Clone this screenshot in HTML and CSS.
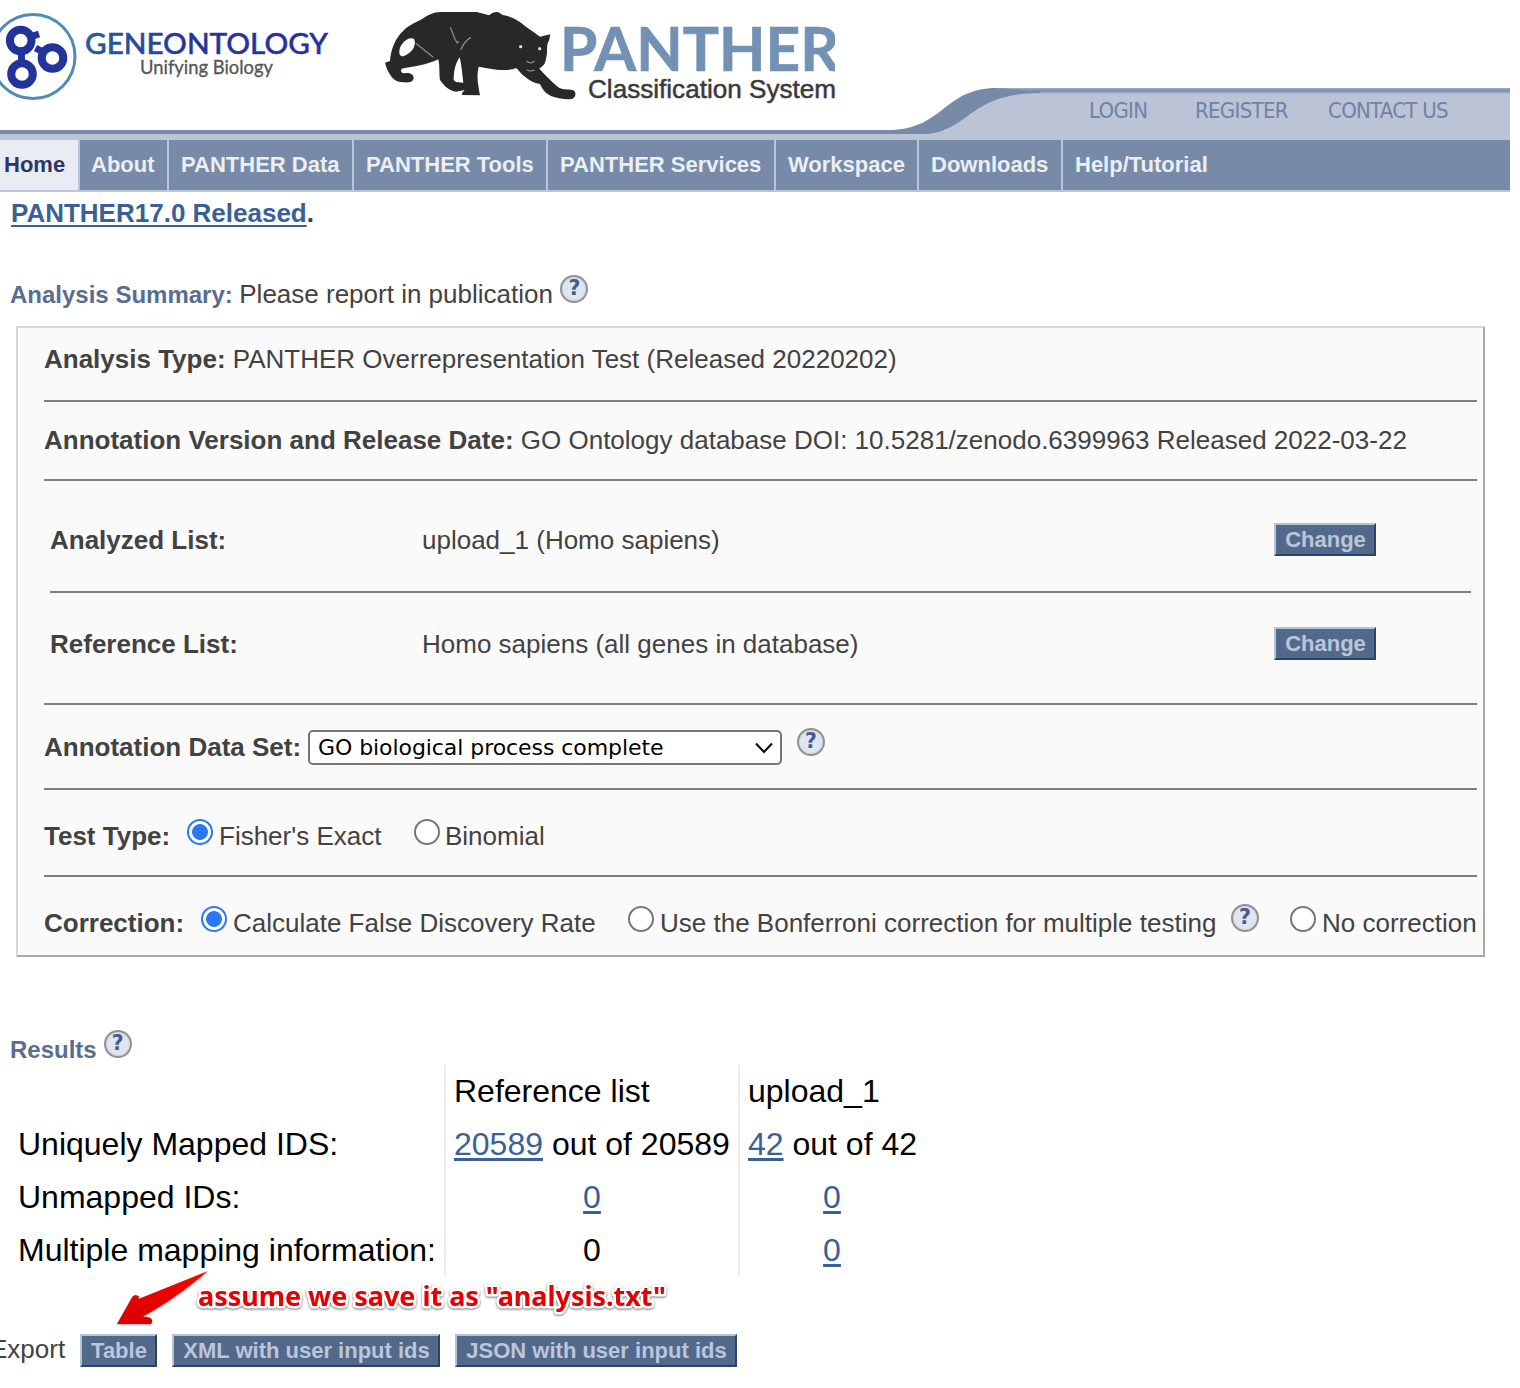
FILE: index.html
```html
<!DOCTYPE html>
<html lang="en">
<head>
<meta charset="utf-8">
<title>PANTHER Classification System</title>
<link rel="stylesheet" href="styles.css">
</head>
<body>
<header class="masthead">
  <svg class="banner" width="1510" height="140" viewBox="0 0 1510 140">
    <defs>
      <linearGradient id="rim" x1="0" y1="0" x2="0" y2="1">
        <stop offset="0" stop-color="#a3afc5"/><stop offset=".45" stop-color="#778cad"/><stop offset="1" stop-color="#b4bfd2"/>
      </linearGradient>
      <linearGradient id="word" x1="0" y1="0" x2="1" y2="0">
        <stop offset="0" stop-color="#23629c"/><stop offset=".3" stop-color="#24479a"/><stop offset=".45" stop-color="#27309a"/><stop offset="1" stop-color="#27309a"/>
      </linearGradient>
      <clipPath id="logoEdge"><rect x="380" y="12" width="455" height="92"/></clipPath>
    </defs>
    <rect y="130" width="1510" height="4" fill="#778ba9"/>
    <rect y="134" width="1510" height="6" fill="#bac6d7"/>
    <path d="M924 134C966 134 966 93 1031 93L1031 90H1510V136H924Z" fill="#bac4d6"/>
    <rect x="1000" y="88" width="510" height="6" fill="url(#rim)"/>
    <path d="M888 130C944 130 943 88 997 88L1010 89L1040 91.500V93C966 93 970 134 920 134H870V130Z" fill="#778ba9"/>
    <g fill="none">
      <circle cx="33" cy="56.500" r="42" stroke="#4d8cb5" stroke-width="3"/>
      <g stroke="#22339a" stroke-width="8">
        <circle cx="20.700" cy="40.500" r="10.800"/>
        <circle cx="22" cy="74" r="10.800"/>
        <circle cx="52.500" cy="58" r="10.800"/>
        <path d="M21.500 50V65M30 37L39 34M43 52L35.500 48" stroke-width="7"/>
      </g>
    </g>
    <text x="85" y="54" class="go-name" fill="url(#word)" textLength="243" lengthAdjust="spacingAndGlyphs">GENEONTOLOGY</text>
    <text x="140" y="73.500" class="go-tag" textLength="133" lengthAdjust="spacingAndGlyphs">Unifying Biology</text>
    <g clip-path="url(#logoEdge)">
      <g transform="translate(370 0) scale(.33333)">
        <path fill="#292728" d="M45 188L60 183C62 150 75 115 100 92C120 72 140 68 160 55C175 44 190 37 210 36H320L358 46C365 38 372 36 380 36C388 36 392 42 398 45C430 50 450 65 465 78C480 90 495 98 510 110L541 103L537 122C530 130 532 140 531 160C528 180 526 190 520 196L508 206C525 225 545 245 565 262C580 272 600 266 612 272C620 280 616 292 608 296C590 300 570 296 550 290C530 285 518 270 510 252C490 250 470 235 455 222C448 215 445 208 438 204C420 212 390 212 360 206L326 200C320 225 322 245 330 286L276 285C275 278 280 274 284 270L258 275C240 272 225 262 210 240C207 225 210 200 205 178C170 195 130 200 95 206C90 215 95 220 105 220C120 215 132 225 131 235C128 250 110 248 92 246C70 245 60 225 50 205Z"/>
        <path fill="#fff" d="M132 116C112 108 90 132 88 153C87 167 94 171 102 168C120 160 134 148 135 126ZM269 172C256 190 251 215 251 240L258 246L280 248C277 225 275 195 269 172Z"/>
        <path fill="none" stroke="#8b8b8d" stroke-width="4" d="M240 82C250 95 248 112 262 129L266 124M272 150C280 130 288 120 303 112M137 130L190 172M470 183Q481 194 493 183M470 210Q482 215 494 210"/>
        <g fill="#ddd"><circle cx="452" cy="140" r="5"/><circle cx="509" cy="146" r="5"/></g>
      </g>
      <text x="560" y="71" class="panther-name" textLength="279" lengthAdjust="spacingAndGlyphs">PANTHER</text>
      <text x="588" y="98" class="panther-tag" textLength="248" lengthAdjust="spacingAndGlyphs">Classification System</text>
    </g>
  </svg>
  <div class="account">
    <a>LOGIN</a><a>REGISTER</a><a>CONTACT US</a>
  </div>
</header>
<nav class="menu">
  <a class="current">Home</a><a class="about">About</a><a>PANTHER Data</a><a>PANTHER Tools</a><a>PANTHER Services</a><a>Workspace</a><a>Downloads</a><a>Help/Tutorial</a>
</nav>
<main>
  <p class="notice"><a href="#">PANTHER17.0 Released</a>.</p>
  <p class="summary"><b class="heading">Analysis Summary:</b> <span>Please report in publication</span><i class="help">?</i></p>
  <section class="panel">
    <div class="row type"><b>Analysis Type:</b> PANTHER Overrepresentation Test (Released 20220202)</div>
    <div class="row version"><b>Annotation Version and Release Date:</b> GO Ontology database DOI: 10.5281/zenodo.6399963 Released 2022-03-22</div>
    <div class="lists">
      <div class="list analyzed"><b>Analyzed List:</b><span>upload_1 (Homo sapiens)</span><button class="btn">Change</button></div>
      <div class="list reference"><b>Reference List:</b><span>Homo sapiens (all genes in database)</span><button class="btn">Change</button></div>
    </div>
    <div class="row dataset"><b>Annotation Data Set:</b>
      <div class="select"><span>GO biological process complete</span><svg width="18" height="12" viewBox="0 0 18 12"><path d="M1 1.500L9 10L17 1.500" fill="none" stroke="#111" stroke-width="2.200"/></svg></div>
      <i class="help">?</i></div>
    <div class="row test"><b>Test Type:</b>
      <label class="fisher"><input type="radio" name="test" checked>Fisher's Exact</label>
      <label class="binomial"><input type="radio" name="test">Binomial</label></div>
    <div class="row correction"><b>Correction:</b>
      <label class="fdr"><input type="radio" name="corr" checked>Calculate False Discovery Rate</label>
      <label class="bonferroni"><input type="radio" name="corr">Use the Bonferroni correction for multiple testing</label>
      <i class="help">?</i>
      <label class="none"><input type="radio" name="corr">No correction</label></div>
  </section>
  <p class="results-title"><b class="heading">Results</b><i class="help">?</i></p>
  <table class="results">
    <tr><td></td><td>Reference list</td><td>upload_1</td></tr>
    <tr><td>Uniquely Mapped IDS:</td><td><a href="#">20589</a> out of 20589</td><td><a href="#">42</a> out of 42</td></tr>
    <tr><td>Unmapped IDs:</td><td class="num"><a href="#">0</a></td><td class="num"><a href="#">0</a></td></tr>
    <tr><td>Multiple mapping information:</td><td class="num">0</td><td class="num"><a href="#">0</a></td></tr>
  </table>
  <div class="export"><span>Export</span><button class="btn table">Table</button><button class="btn xml">XML with user input ids</button><button class="btn json">JSON with user input ids</button></div>
</main>
<svg class="note" width="600" height="70" viewBox="100 1265 600 70">
  <defs><linearGradient id="red" x1="0" y1="0" x2="0" y2="1"><stop offset="0" stop-color="#f50500"/><stop offset="1" stop-color="#d90000"/></linearGradient></defs>
  <path class="arrow" fill="url(#red)" d="M117 1324L132.500 1296.500Q135.500 1293.500 139 1296.500L138.500 1299L208 1271C190 1286 168 1303 143 1316.500L149.500 1317.500Q154 1320 151 1324Z"/>
  <text x="198" y="1305.500" class="note-text" textLength="468" lengthAdjust="spacingAndGlyphs">assume we save it as "analysis.txt"</text>
</svg>
</body>
</html>
```
FILE: styles.css
```css
* { box-sizing: border-box; }
body {
  margin: 0;
  width: 1520px;
  height: 1388px;
  overflow: hidden;
  position: relative;
  background: #fff;
  color: #424242;
  font: 26px/30px "Liberation Sans", Arial, sans-serif;
}
p { margin: 0; }
a { color: #3b6097; }
.masthead { position: relative; width: 1510px; height: 140px; }
.banner { display: block; }
.go-name { font: 500 29px Lato, sans-serif; stroke: #27409a; stroke-width: .5px; }
.go-tag { font: 20px Lato, sans-serif; fill: #555; stroke: #555; stroke-width: .3px; }
.panther-name { font: bold 62px Lato, sans-serif; fill: #7291b4; stroke: #7291b4; stroke-width: .7px; }
.panther-tag { font: 26px "Liberation Sans", sans-serif; fill: #3a3a3a; stroke: #3a3a3a; stroke-width: .5px; }
.account {
  position: absolute;
  left: 1089px;
  top: 98px;
  display: grid;
  grid-template-columns: 106px 133px 130px;
  white-space: nowrap;
  font: 22px/26px "DejaVu Sans Condensed", "DejaVu Sans", sans-serif;
  font-stretch: condensed;
  letter-spacing: -.7px;
}
.account a { color: #6f82a3; }

.menu {
  display: grid;
  grid-template-columns: 80px 89px 185px 194px 228px 143px 144px 1fr;
  width: 1510px;
  height: 52px;
  background: #778ba9;
  border-bottom: 2px solid #bac6d7;
  font-size: 22px;
  font-weight: bold;
  line-height: 49px;
  white-space: nowrap;
}
.menu a { color: #ebeef3; padding-left: 12px; border-right: 2px solid #bac6d7; }
.menu a:last-child { border-right: 0; }
.menu .current { background: #e9ecf3; color: #2b3666; padding-left: 4px; }
.menu .about { padding-left: 11px; }

.notice { padding: 6px 0 0 11px; height: 87px; font-weight: bold; }
.notice a, .results a { text-decoration-thickness: 2px; text-underline-offset: 3px; }
.results a { text-decoration-thickness: 3px; }
.summary { height: 47px; padding-left: 10px; display: flex; white-space: pre; }
.heading { color: #596d90; font-size: 24px; line-height: 32px; }
.summary .heading { margin-right: 6.500px; }
.summary .help { margin: -4px 0 0 7.500px; }
.help {
  display: block;
  flex: none;
  width: 28px;
  height: 28px;
  border-radius: 50%;
  border: 2px solid #929292;
  background: #dfe6f1;
  box-shadow: inset 0 0 2px 0 #b5b8bd;
  color: #465c8d;
  font: bold 20.500px/23px "DejaVu Sans", sans-serif;
  text-align: center;
}

.panel {
  margin-left: 16px;
  width: 1469px;
  height: 631px;
  border: 2px solid;
  border-color: #d6d6d6 #a9a9a9 #a9a9a9 #d6d6d6;
  background: #fafafa;
  padding: 0 6px 0 26px;
  white-space: nowrap;
}
.row { border-bottom: 2px solid #808080; }
.row b { white-space: nowrap; }
.type { height: 74px; padding-top: 16px; }
.version { height: 79px; padding-top: 23px; }
.lists { height: 224px; padding: 0 6px; border-bottom: 2px solid #808080; }
.list { display: grid; grid-template-columns: 372px 852px 102px; height: 112px; }
.analyzed { padding-top: 44px; border-bottom: 2px solid #808080; }
.reference { padding-top: 36px; }
.list .btn { margin-top: -2px; }
.btn {
  height: 33px;
  padding: 0 0 0 1px;
  border: 2px solid;
  border-color: #b5c3d6 #2c4268 #2c4268 #b5c3d6;
  background: #53698b;
  color: #bac6d9;
  font: bold 22px/28px "Liberation Sans", Arial, sans-serif;
  white-space: nowrap;
}
.dataset { height: 85px; padding-top: 27px; display: flex; }
.dataset b { width: 264px; }
.select {
  display: flex;
  align-items: center;
  justify-content: space-between;
  width: 474px;
  height: 35px;
  margin: -2px 15px 0 0;
  padding: 0 7px 0 8px;
  background: #fff;
  border: 2px solid #767676;
  border-radius: 5px;
  color: #000;
  font: 22px/32px "DejaVu Sans", Verdana, sans-serif;
  letter-spacing: -.07px;
}
.select span { padding-top: 1px; }
.dataset .help { margin-top: -4px; }
.test { height: 87px; padding-top: 31px; display: flex; }
.test b { width: 143px; }
.fisher { width: 227px; }
.correction { height: 78px; padding-top: 31px; display: flex; border-bottom: 0; }
.correction b { width: 157px; }
.fdr { width: 427px; }
.bonferroni { width: 603px; }
.correction .help { margin: -4px 31px 0 0; }
label { display: flex; flex: none; }
input {
  appearance: none;
  flex: none;
  width: 26px;
  height: 26px;
  margin: -2px 6px 0 0;
  border: 2px solid #767676;
  border-radius: 50%;
  background: #fff;
}
input:checked { border-color: #2a77f8; background: radial-gradient(circle, #2a77f8 7.500px, #fff 8.300px); }
.binomial input { margin-right: 5px; }
.bonferroni input, .none input { margin-right: 6px; }

.results-title { display: flex; height: 108px; padding: 77px 0 0 10px; }
.results-title .help { margin: -4px 0 0 7px; }
.results {
  margin-left: 10px;
  width: 914px;
  table-layout: fixed;
  border-collapse: separate;
  border-spacing: 0;
  color: #000;
  font-size: 32px;
  line-height: 37px;
  white-space: nowrap;
}
.results td { height: 53px; padding: 8px; }
.results td:nth-child(1) { width: 434px; }
.results td:nth-child(2) { width: 294px; border-left: 2px solid #ececec; }
.results td:nth-child(3) { border-left: 2px solid #ececec; }
.results .num { text-align: center; }
.export { display: flex; margin: 57px 0 0 -10px; }
.export span { width: 90px; }
.table { width: 77px; margin-right: 15px; }
.xml { width: 268px; margin-right: 15px; }
.json { width: 282px; }

.note { position: absolute; left: 100px; top: 1265px; }
.arrow { filter: drop-shadow(0 1px 1px rgba(0, 0, 0, .35)); }
.note-text {
  font: bold 27px "Noto Sans", sans-serif;
  fill: #e60000;
  stroke: #fff;
  stroke-width: 5px;
  stroke-linejoin: round;
  paint-order: stroke;
  filter: drop-shadow(0 1px 1px rgba(0, 0, 0, .55));
}
```
